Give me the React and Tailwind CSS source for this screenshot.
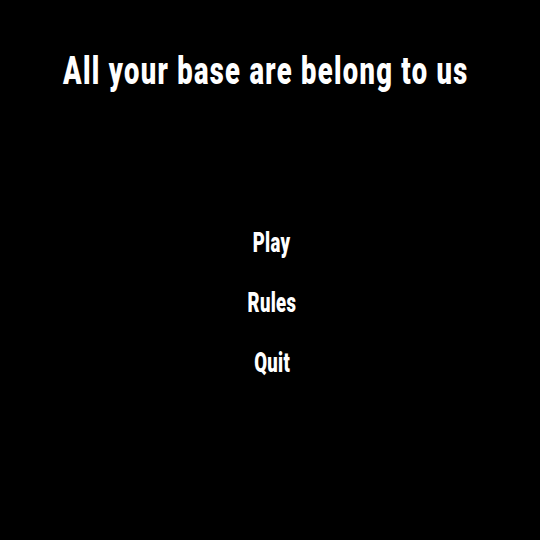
export default function App() {
  return (
    <div className="h-[540px] w-[540px] overflow-hidden bg-black text-white font-['Roboto',sans-serif] font-black">
      <h1 className="pt-[47px] pl-[63px] whitespace-nowrap text-[39px] leading-[48px] font-black">
        <span className="inline-block origin-left scale-x-[0.7] tracking-[1.9px]">All your base are belong to us</span>
      </h1>
      <nav className="mt-[133px] flex flex-col items-center pl-[4px] text-[28px] leading-[30px] gap-[30px]">
        <button className="font-black scale-x-[0.66] tracking-[0.5px]">Play</button>
        <button className="font-black scale-x-[0.66] tracking-[0.5px]">Rules</button>
        <button className="font-black scale-x-[0.66] tracking-[0.5px]">Quit</button>
      </nav>
    </div>
  );
}
